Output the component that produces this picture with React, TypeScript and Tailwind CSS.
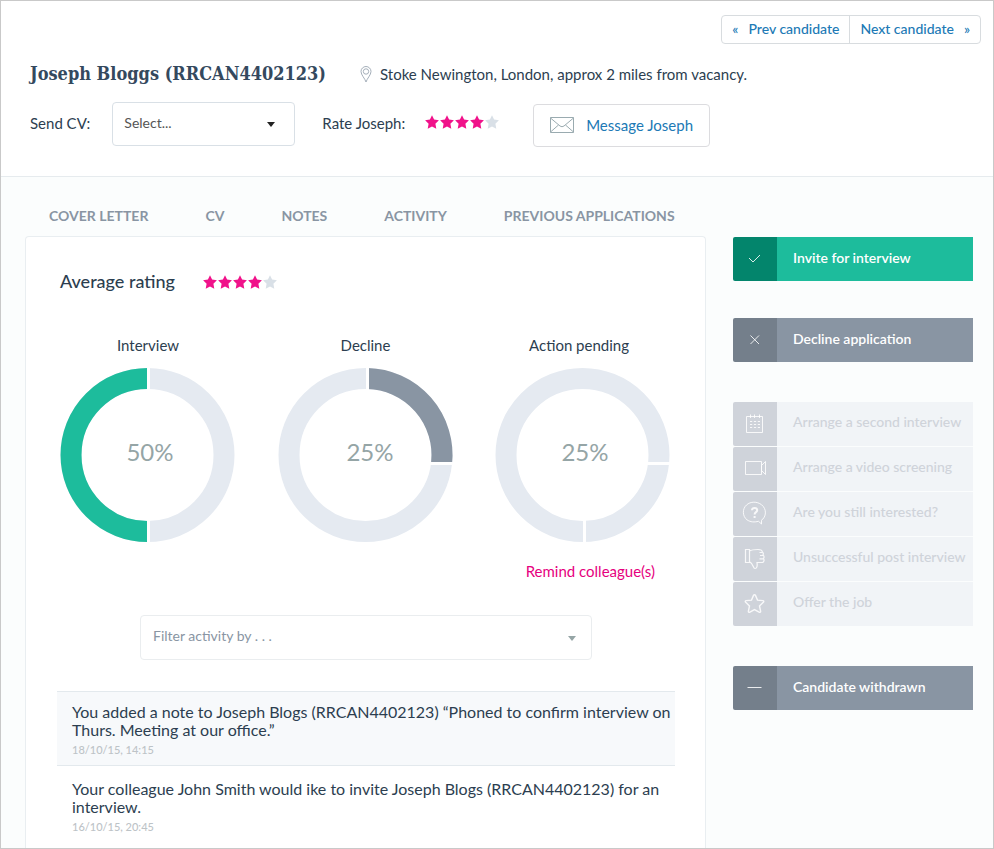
import React from "react";

const STAR = "M7 0.3 L9.1 4.6 L13.900 5.300 L10.4 8.7 L11.3 13.7 L7 11.4 L2.7 13.7 L3.6 8.7 L0.1 5.3 L4.9 4.6 Z";

function Stars({ value, label }: { value: number; label: string }) {
  return (
    <div role="img" aria-label={label} className="flex gap-px">
      {[1, 2, 3, 4, 5].map((n) => (
        <svg key={n} viewBox="0 0 14 14" className={n <= value ? "size-3.5 fill-[#f0128a]" : "size-3.5 fill-[#d9e0e7]"}>
          <path d={STAR} />
        </svg>
      ))}
    </div>
  );
}

function Caret({ className }: { className: string }) {
  return (
    <svg viewBox="0 0 8 5" className={"pointer-events-none absolute top-1/2 -mt-0.5 h-[5px] w-2 " + className}>
      <path d="M0 0h8L4 5z" />
    </svg>
  );
}

interface DonutProps {
  caption: string;
  value: string;
  textX: number;
  captionClass?: string;
  arc?: { d: string; color: string };
  gaps: string[];
}

function Donut({ caption, value, textX, captionClass = "", arc, gaps }: DonutProps) {
  return (
    <figure className="flex w-44 flex-col items-center">
      <figcaption className={"mb-3 text-[15px] leading-5 text-[#2c3e50] " + captionClass}>{caption}</figcaption>
      <svg viewBox="0 0 176 176" className="size-44" role="img" aria-label={caption + " " + value}>
        <circle cx="87.5" cy="88" r="76.5" fill="none" stroke="#e5eaf1" strokeWidth="21" />
        {arc && <path d={arc.d} fill="none" stroke={arc.color} strokeWidth="21" />}
        {gaps.map((d) => (
          <path key={d} d={d} stroke="#fff" strokeWidth="3" />
        ))}
        <text x={textX} y="94" textAnchor="middle" fill="#95a5a6" className="text-2xl">
          {value}
        </text>
      </svg>
    </figure>
  );
}

const donuts: DonutProps[] = [
  {
    caption: "Interview",
    value: "50%",
    textX: 90,
    arc: { d: "M87.500 11.500A76.500 76.500 0 0 0 87.500 164.500", color: "#1dbc9c" },
    gaps: ["M88.500 0V24", "M88.500 152V176"],
  },
  {
    caption: "Decline",
    value: "25%",
    textX: 92,
    arc: { d: "M89.500 11.500A76.500 76.500 0 0 1 163.600 96", color: "#8995a3" },
    gaps: ["M89.500 0V24", "M151 96.500H176"],
  },
  {
    caption: "Action pending",
    value: "25%",
    textX: 90,
    captionClass: "pr-2",
    gaps: ["M89.500 152V176", "M151 96.500H176"],
  },
];

function Icon({ children }: { children: React.ReactNode }) {
  return (
    <svg viewBox="0 0 24 24" className="size-6" fill="none" stroke="currentColor" strokeWidth="1" aria-hidden="true">
      {children}
    </svg>
  );
}

const icons = {
  check: <path d="M7 12L11 16L18 9" />,
  cross: <path d="M8.500 8.500L17 17M17 8.500L8.500 17" />,
  minus: <path d="M5.500 12.500H19.500" />,
  calendar: (
    <>
      <path d="M4.500 5.500H20.500V21.500H4.500ZM8.500 3.500V7M12.500 3.500V7M17.500 3.500V7" />
      <path d="M8 10.500H18M8 13.500H18M8 16.500H18" strokeWidth="1.200" strokeDasharray="2.200 1.700" />
    </>
  ),
  video: <path d="M3.500 5.500H19.500V18.500H3.500ZM19.500 9.500L21 8L23.500 5.500V18.500L21 16L19.500 14.500Z" />,
  question: (
    <>
      <path d="M19.200 19.500C24.500 16 25 8 19.500 3.700C15 0.300 8.500 0.300 4.500 4C0 8 0.500 15.500 5 18.800C8.500 21.300 12.500 21.300 16.500 20.300L19.500 23V19.500" />
      <path d="M10 9.300C10 6.300 15.200 6.300 15.200 9.300C15.200 11.300 12.600 11 12.600 13.500M12.600 15V17" strokeWidth="2" />
    </>
  ),
  thumb: (
    <path
      d="M3.500 3.500H7.500V16.500H3.500ZM7.500 5C9.500 3.800 12 3.500 16 3.500C19 3.500 20.300 4 20.300 6C21.500 6.500 21.500 8 21 9C22.300 10 22.300 11.500 21.500 12.500C22.500 14 22 16.500 20 16.500H15C15.500 20 15 22.500 13 22.500C10.800 22.500 12 18.500 7.500 15.500M17.500 6.500H20.300M18 9.500H21M17.500 12.800H21.500"
      strokeWidth="1.200"
    />
  ),
  star: (
    <path
      d="M12.500 3.700C13 3.700 13.300 4 13.500 4.400L15.500 9.100L20.800 9.600C21.900 9.700 22 10.600 21.300 11.300L17.500 14.900L18.600 20.100C18.800 21.200 18 21.700 17.100 21.200L12.500 18.600L7.900 21.200C7 21.700 6.200 21.200 6.400 20.100L7.500 14.900L3.700 11.300C3 10.600 3.200 9.700 4.200 9.600L9.500 9.100L11.500 4.400C11.700 4 12 3.700 12.500 3.700Z"
      strokeWidth="1.400"
    />
  ),
};

function Action({ icon, label, tone }: { icon: React.ReactNode; label: string; tone: "green" | "slate" | "muted" }) {
  const iconTone = { green: "bg-[#03856c]", slate: "bg-[#747f8b]", muted: "bg-[#cfd3da]" }[tone];
  const textTone = {
    green: "bg-[#1dbc9c] pb-0.5 text-white font-semibold",
    slate: "bg-[#8995a3] pb-0.5 text-white font-semibold",
    muted: "bg-[#f1f4f7] pb-1 text-[#cfd3da] font-medium",
  }[tone];
  return (
    <button type="button" disabled={tone === "muted"} className="flex h-11 w-full overflow-hidden rounded-l-xs text-left text-sm">
      <span className={"flex h-full w-11 shrink-0 items-center justify-center pr-0.5 pb-0.5 text-white/85 " + iconTone}>
        <Icon>{icon}</Icon>
      </span>
      <span className={"flex h-full flex-1 items-center pl-4 whitespace-nowrap " + textTone}>{label}</span>
    </button>
  );
}

const activity = [
  {
    text: "You added a note to Joseph Blogs (RRCAN4402123) “Phoned to confirm interview on Thurs. Meeting at our office.”",
    date: "18/10/15, 14:15",
  },
  {
    text: "Your colleague John Smith would ike to invite Joseph Blogs (RRCAN4402123) for an interview.",
    date: "16/10/15, 20:45",
  },
];

export default function App() {
  return (
    <div className="flex min-h-screen flex-col border border-[#c9c9c9] bg-[#fbfdfd] font-[Lato,sans-serif] text-[15px] text-[#2c3e50]">
      <header className="border-b border-[#e6ebee] bg-white pt-3.5 pr-3 pb-[30px] pl-[29px]">
        <nav className="flex justify-end">
          <div className="flex h-[29px] divide-x divide-[#d8dcdf] rounded-sm border border-[#d8dcdf] text-sm font-medium text-[#2079b5]">
            <a href="#prev" className="flex items-center gap-2.5 px-2.5 pb-0.5">
              <span>«</span>Prev candidate
            </a>
            <a href="#next" className="flex items-center gap-2.5 px-2.5 pb-0.5">
              Next candidate<span>»</span>
            </a>
          </div>
        </nav>
        <div className="mt-4 flex h-7 items-center gap-[34px]">
          <h1 className="font-['DejaVu_Serif_Condensed','DejaVu_Serif',serif] text-lg font-bold text-[#34495e]">Joseph Bloggs (RRCAN4402123)</h1>
          <p className="flex items-center gap-2">
            <svg viewBox="0 0 12 17" className="h-[17px] w-3" fill="none" stroke="#a5afba" aria-hidden="true">
              <path d="M6 16C5 12.500 1 9 1 5.500A5 5 0 0 1 11 5.500C11 9 7 12.500 6 16Z" />
              <circle cx="6" cy="5.500" r="2.700" />
            </svg>
            Stoke Newington, London, approx 2 miles from vacancy.
          </p>
        </div>
        <div className="mt-3.5 flex h-11 items-center">
          <label htmlFor="send-cv" className="pb-0.5">
            Send CV:
          </label>
          <div className="relative ml-[22px] w-[183px]">
            <select
              id="send-cv"
              className="h-11 w-full appearance-none rounded border border-[#d9e0e6] bg-white px-[11px] pb-0.5 text-sm text-[#555]"
            >
              <option>Select...</option>
            </select>
            <Caret className="right-5 fill-[#222]" />
          </div>
          <span className="mr-5 ml-[27px] pb-0.5">Rate Joseph:</span>
          <div className="pb-1">
            <Stars value={4} label="Rated 4 out of 5" />
          </div>
          <button
            type="button"
            className="mt-0.5 ml-[34px] flex h-[43px] items-center gap-3 rounded border border-[#dcdcdf] px-4 text-[15px] text-[#2079b5]"
          >
            <svg viewBox="0 0 24 16" className="h-4 w-6" fill="none" stroke="#9aabb0" aria-hidden="true">
              <path d="M0.500 0.500H23.500V15.500H0.500ZM0.500 1L10 9Q12 10.500 14 9L23.500 1M0.500 15L8.500 8M23.500 15L15.500 8" />
            </svg>
            Message Joseph
          </button>
        </div>
      </header>

      <div className="flex grow items-stretch gap-[27px] pr-5 pl-6">
        <main className="flex min-w-0 flex-1 flex-col">
          <nav className="flex h-[59px] items-center gap-[57px] pt-[18px] pl-6 text-sm font-bold text-[#8995a3]">
            <a href="#cover-letter">COVER LETTER</a>
            <a href="#cv">CV</a>
            <a href="#notes">NOTES</a>
            <a href="#activity">ACTIVITY</a>
            <a href="#previous">PREVIOUS APPLICATIONS</a>
          </nav>
          <section className="grow rounded-t-sm border border-b-0 border-[#e9eef1] bg-white pt-[31px] pr-[30px] pl-[31px]">
            <div className="flex h-7 items-center gap-7 pl-[3px]">
              <h2 className="pb-0.5 text-lg font-medium">Average rating</h2>
              <Stars value={4} label="Average rating 4 out of 5" />
            </div>
            <div className="mt-[39px] flex justify-between pr-1 pl-[3px]">
              {donuts.map((d) => (
                <Donut key={d.caption} {...d} />
              ))}
            </div>
            <div className="mt-[18px] flex justify-end pr-5">
              <a href="#remind" className="leading-5 text-[#e6007e]">
                Remind colleague(s)
              </a>
            </div>
            <div className="relative mx-[83px] mt-[34px]">
              <select
                aria-label="Filter activity"
                className="h-[45px] w-full appearance-none rounded-sm border border-[#eaedef] bg-white px-3 pb-1 text-sm text-[#8995a3]"
              >
                <option>Filter activity by . . .</option>
              </select>
              <Caret className="right-4 fill-[#95a5a6]" />
            </div>
            <ul className="mt-[31px]">
              {activity.map((a) => (
                <li key={a.date} className="border-[#e3e9ed] pt-[11px] pr-1 pb-1.5 pl-[15px] first:border-y first:bg-[#f7f9fb] last:pt-3.5">
                  <p className="text-base leading-[18px]">{a.text}</p>
                  <time className="block pt-0.5 text-[11px] leading-[18px] font-medium text-[#bdc3c7]">{a.date}</time>
                </li>
              ))}
            </ul>
          </section>
        </main>

        <aside className="w-60 shrink-0 pt-15">
          <Action icon={icons.check} label="Invite for interview" tone="green" />
          <div className="pt-[37px]">
            <Action icon={icons.cross} label="Decline application" tone="slate" />
          </div>
          <div className="flex flex-col gap-px py-10">
            <Action icon={icons.calendar} label="Arrange a second interview" tone="muted" />
            <Action icon={icons.video} label="Arrange a video screening" tone="muted" />
            <Action icon={icons.question} label="Are you still interested?" tone="muted" />
            <Action icon={icons.thumb} label="Unsuccessful post interview" tone="muted" />
            <Action icon={icons.star} label="Offer the job" tone="muted" />
          </div>
          <Action icon={icons.minus} label="Candidate withdrawn" tone="slate" />
        </aside>
      </div>
    </div>
  );
}
